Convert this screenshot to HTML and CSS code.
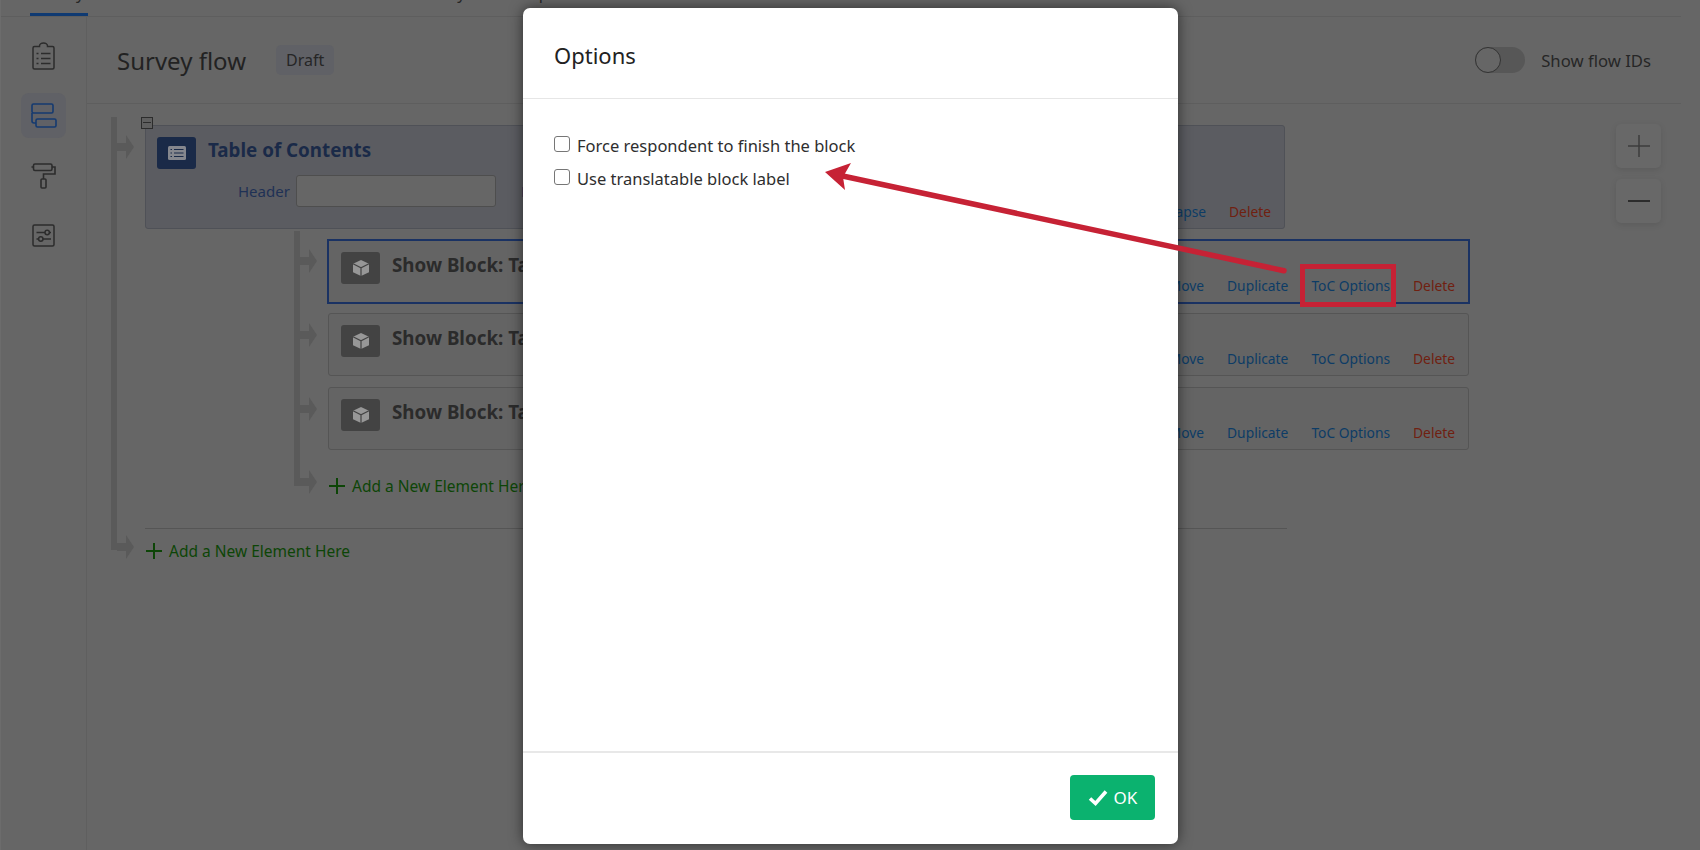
FILE: index.html
```html
<!DOCTYPE html>
<html lang="en">
<head>
<meta charset="utf-8">
<title>Survey flow</title>
<link rel="stylesheet" href="styles.css">
</head>
<body>
<div class="app">
  <nav class="topnav">
    <span class="tab active">Survey</span>
    <span class="tab">Workflows</span>
    <span class="tab">Distributions</span>
    <span class="tab">Data &amp; Analysis</span>
    <span class="tab">Reports</span>
  </nav>
  <div class="workspace">
    <aside class="sidebar">
      <a class="side-item">
        <svg width="23" height="28" viewBox="0 0 23 28" fill="none" stroke="#2c2c2c" stroke-width="1.500"><path d="M7.500 4.500H2.500A1.500 1.500 0 0 0 1 6V25.500A1.500 1.500 0 0 0 2.500 27H20.500A1.500 1.500 0 0 0 22 25.500V6A1.500 1.500 0 0 0 20.500 4.500H15.500V4A4 3 0 0 0 7.500 4Z"/><path d="M9 11.500H18.500M9 16.500H18.500M9 21.500H18.500M4.500 11.500H6.500M4.500 16.500H6.500M4.500 21.500H6.500"/></svg>
      </a>
      <a class="side-item current">
        <svg width="26" height="25" viewBox="0 0 26 25" fill="none" stroke="#143a70" stroke-width="1.600"><rect x="1" y="1" width="21" height="9" rx="1.500"/><rect x="5" y="16" width="20" height="8" rx="1.500"/><path d="M1 10V18A2 2 0 0 0 3 20H5"/></svg>
      </a>
      <a class="side-item">
        <svg width="25" height="26" viewBox="0 0 25 26" fill="none" stroke="#2c2c2c" stroke-width="1.600"><rect x="2.500" y="1" width="18.500" height="6.500" rx="1.500"/><path d="M0.500 4H2.500M21 4H24V11H12.500V16"/><rect x="10" y="16" width="5" height="9" rx="1"/></svg>
      </a>
      <a class="side-item">
        <svg width="23" height="23" viewBox="0 0 23 23" fill="none" stroke="#2c2c2c" stroke-width="1.500"><rect x="1" y="1" width="21" height="21" rx="1.500"/><path d="M4.500 8.500H13M17.500 8.500H19M4.500 15H6.500M11 15H19"/><circle cx="15.200" cy="8.500" r="2.200"/><circle cx="8.800" cy="15" r="2.200"/></svg>
      </a>
    </aside>
    <main class="content">
      <header class="page-head">
        <h1 class="page-title">Survey flow</h1>
        <span class="chip">Draft</span>
        <span class="toggle"><span class="knob"></span></span>
        <span class="toggle-label">Show flow IDs</span>
      </header>
      <div class="canvas">
        <div class="branch outer">
          <div class="row first">
            <svg class="stub" width="17" height="24" viewBox="0 0 17 24"><path class="arrow" d="M0 8H9V0L17 12L9 24V16H0Z"/></svg>
            <section class="block toc">
              <span class="collapse-box"></span>
              <div class="toc-main">
                <div class="block-head">
                  <span class="type-icon navy">
                    <svg width="18" height="14" viewBox="0 0 18 14"><rect width="18" height="14" rx="1.500" fill="#85878e"/><path d="M2.500 3.500H4M6 3.500H15.500M2.500 7H4M6 7H15.500M2.500 10.500H4M6 10.500H15.500" stroke="#1a2a48" stroke-width="1.200"/></svg>
                  </span>
                  <h2 class="block-title navy-text">Table of Contents</h2>
                </div>
                <div class="toc-form">
                  <label class="field-label">Header</label>
                  <span class="field"></span>
                  <label class="field-label second">Footer</label>
                </div>
              </div>
              <div class="actions">
                <a class="link">Collapse</a>
                <a class="link danger">Delete</a>
              </div>
            </section>
          </div>
          <div class="branch inner">
            <div class="row tight">
              <svg class="stub" width="17" height="24" viewBox="0 0 17 24"><path class="arrow" d="M0 8H9V0L17 12L9 24V16H0Z"/></svg>
              <section class="block selected">
                <div class="block-head">
                  <span class="type-icon">
                    <svg width="18" height="18" viewBox="0 0 18 18"><path d="M9 1L17 4.800V13.200L9 17L1 13.200V4.800Z" fill="#979797"/><path d="M1 4.800L9 8.800L17 4.800M9 8.800V17" fill="none" stroke="#434343" stroke-width="1.200"/></svg>
                  </span>
                  <h2 class="block-title">Show Block: Table of Contents</h2>
                </div>
                <div class="actions">
                  <a class="link">Move</a>
                  <a class="link">Duplicate</a>
                  <a class="link">ToC Options</a>
                  <a class="link danger">Delete</a>
                </div>
              </section>
            </div>
            <div class="row">
              <svg class="stub" width="17" height="24" viewBox="0 0 17 24"><path class="arrow" d="M0 8H9V0L17 12L9 24V16H0Z"/></svg>
              <section class="block">
                <div class="block-head">
                  <span class="type-icon">
                    <svg width="18" height="18" viewBox="0 0 18 18"><path d="M9 1L17 4.800V13.200L9 17L1 13.200V4.800Z" fill="#979797"/><path d="M1 4.800L9 8.800L17 4.800M9 8.800V17" fill="none" stroke="#434343" stroke-width="1.200"/></svg>
                  </span>
                  <h2 class="block-title">Show Block: Table of Contents</h2>
                </div>
                <div class="actions">
                  <a class="link">Move</a>
                  <a class="link">Duplicate</a>
                  <a class="link">ToC Options</a>
                  <a class="link danger">Delete</a>
                </div>
              </section>
            </div>
            <div class="row">
              <svg class="stub" width="17" height="24" viewBox="0 0 17 24"><path class="arrow" d="M0 8H9V0L17 12L9 24V16H0Z"/></svg>
              <section class="block">
                <div class="block-head">
                  <span class="type-icon">
                    <svg width="18" height="18" viewBox="0 0 18 18"><path d="M9 1L17 4.800V13.200L9 17L1 13.200V4.800Z" fill="#979797"/><path d="M1 4.800L9 8.800L17 4.800M9 8.800V17" fill="none" stroke="#434343" stroke-width="1.200"/></svg>
                  </span>
                  <h2 class="block-title">Show Block: Table of Contents</h2>
                </div>
                <div class="actions">
                  <a class="link">Move</a>
                  <a class="link">Duplicate</a>
                  <a class="link">ToC Options</a>
                  <a class="link danger">Delete</a>
                </div>
              </section>
            </div>
            <div class="row add-row">
              <svg class="stub" width="17" height="24" viewBox="0 0 17 24"><path class="arrow" d="M0 8H9V0L17 12L9 24V16H0Z"/></svg>
              <a class="add-link">
                <svg width="16" height="16" viewBox="0 0 16 16"><path d="M8 0V16M0 8H16" stroke="#0d4507" stroke-width="2"/></svg>
                Add a New Element Here
              </a>
            </div>
          </div>
          <hr class="separator">
          <div class="row add-row last">
            <svg class="stub" width="17" height="24" viewBox="0 0 17 24"><path class="arrow" d="M0 8H9V0L17 12L9 24V16H0Z"/></svg>
            <a class="add-link">
              <svg width="16" height="16" viewBox="0 0 16 16"><path d="M8 0V16M0 8H16" stroke="#0d4507" stroke-width="2"/></svg>
              Add a New Element Here
            </a>
          </div>
        </div>
        <div class="zoom-tools">
          <button class="zoom-btn"><svg width="22" height="22" viewBox="0 0 22 22"><path d="M11 0V22M0 11H22" stroke="#3c3c3c" stroke-width="1.500"/></svg></button>
          <button class="zoom-btn"><svg width="22" height="22" viewBox="0 0 22 22"><path d="M0 11H22" stroke="#2c2c2c" stroke-width="2"/></svg></button>
        </div>
      </div>
    </main>
  </div>

  <div class="dialog-layer">
    <div class="dialog">
      <div class="dialog-head">Options</div>
      <div class="dialog-body">
        <label class="check"><span class="box"></span>Force respondent to finish the block</label>
        <label class="check"><span class="box"></span>Use translatable block label</label>
      </div>
      <div class="dialog-foot">
        <button class="ok">
          <svg width="20" height="18" viewBox="0 0 20 18"><path d="M2 9.500L7.500 14.500L18 2.500" fill="none" stroke="#fff" stroke-width="3.600"/></svg>
          OK
        </button>
      </div>
    </div>
  </div>

  <svg class="annotation" width="1700" height="850" viewBox="0 0 1700 850">
    <path d="M1284 270.700L838 175" fill="none" stroke="#c62235" stroke-width="5.500" stroke-linecap="round"/>
    <path d="M825 172L851 163L843 177L845 190Z" fill="#c62235"/>
    <rect x="1302.500" y="266.500" width="91" height="38" fill="none" stroke="#c62235" stroke-width="5"/>
  </svg>
</div>
</body>
</html>
```

FILE: styles.css
```css
* { box-sizing: border-box; }
html, body { margin: 0; padding: 0; }
body {
  font-family: "Noto Sans", "Open Sans", sans-serif;
  background: #666;
  color: #262626;
}
.app {
  position: relative;
  width: 1700px;
  height: 850px;
  overflow: hidden;
  display: flex;
  flex-direction: column;
  border-left: 1px solid #6c6c6c;
}
.topnav {
  flex: none;
  height: 17px;
  margin-right: 19px;
  padding-left: 29px;
  display: flex;
  align-items: flex-end;
  gap: 35px;
  overflow: hidden;
  border-bottom: 1px solid #5e5e5e;
  font-size: 16px;
  line-height: 22px;
}
.tab {
  flex: none;
  padding-bottom: 12px;
  color: #262626;
}
.tab.active {
  width: 58px;
  padding-bottom: 9px;
  text-align: center;
  border-bottom: 4px solid #0f3a72;
  margin-bottom: -1px;
}
.workspace { flex: 1; display: flex; min-height: 0; }
.sidebar {
  flex: none;
  width: 86px;
  padding-top: 16px;
  display: flex;
  flex-direction: column;
  align-items: center;
  gap: 15px;
  border-right: 1px solid #5f5f5f;
}
.side-item {
  width: 45px;
  height: 45px;
  border-radius: 8px;
  display: flex;
  align-items: center;
  justify-content: center;
}
.side-item.current { background: #606166; }
.content {
  flex: 1;
  min-width: 0;
  margin-right: 19px;
  display: flex;
  flex-direction: column;
}
.page-head {
  flex: none;
  height: 87px;
  padding: 0 30px 0 30px;
  display: flex;
  align-items: center;
  border-bottom: 1px solid #5e5e5e;
}
.page-title {
  margin: 0 30px 0 0;
  font-size: 24px;
  font-weight: 400;
  color: #222;
}
.chip {
  padding: 0 10px;
  height: 30px;
  line-height: 30px;
  border-radius: 5px;
  background: #606166;
  font-size: 16px;
  color: #262626;
}
.toggle {
  margin-left: auto;
  width: 50px;
  height: 26px;
  border-radius: 13px;
  background: #575757;
  display: block;
}
.knob {
  display: block;
  width: 26px;
  height: 26px;
  border-radius: 50%;
  background: #666;
  border: 1.500px solid #333;
}
.toggle-label {
  margin-left: 16px;
  font-size: 16.700px;
  color: #262626;
}
.canvas {
  flex: 1;
  position: relative;
  padding: 13px 0 0 24px;
}
.branch { position: relative; padding-left: 6px; }
.branch::before {
  content: "";
  position: absolute;
  left: 0;
  top: 0;
  width: 6px;
  background: #5a5a5a;
}
.outer::before { bottom: 23px; }
.outer { width: 1180px; padding-top: 8px; }
.inner {
  margin: 2px 0 0 177px;
  padding-top: 8px;
  width: 1176px;
}
.inner::before { bottom: 25px; }
.row { display: flex; align-items: flex-start; margin-bottom: 11px; }
.row.first { margin-bottom: 0; }
.row.tight { margin-bottom: 9px; }
.stub { flex: none; margin: 10px 11px 0 0; }
.arrow { fill: #5a5a5a; }
.block {
  position: relative;
  flex: none;
  width: 1141px;
  height: 63px;
  display: flex;
  justify-content: space-between;
  padding: 11px 13px 7px 12px;
  background: #646464;
  border: 1px solid #555;
  border-radius: 3px;
}
.block.selected {
  height: 65px;
  width: 1143px;
  margin-left: -1px;
  border: 2px solid #1a3263;
  border-radius: 0;
}
.block.toc {
  width: 1140px;
  height: 104px;
  background: #5b5c61;
  border-color: #4f5157;
  padding: 11px 13px 7px 11px;
}
.collapse-box {
  position: absolute;
  left: -5px;
  top: -9px;
  width: 12px;
  height: 12px;
  background: #5f5f5f;
  border: 1px solid #2c2c2c;
}
.collapse-box::after {
  content: "";
  position: absolute;
  left: 1px;
  right: 1px;
  top: 4px;
  height: 1px;
  background: #2c2c2c;
}
.block-head { display: flex; align-items: flex-start; align-self: flex-start; }
.type-icon {
  flex: none;
  width: 39px;
  height: 32px;
  border-radius: 3px;
  background: #434343;
  display: flex;
  align-items: center;
  justify-content: center;
}
.type-icon.navy { background: #1a2a48; }
.block-title {
  margin: 0 0 0 12px;
  font-size: 18.800px;
  line-height: 27px;
  font-weight: 700;
  white-space: nowrap;
  color: #2b2b2b;
}
.navy-text { color: #1a2a48; }
.toc-form {
  display: flex;
  align-items: center;
  margin-top: 6px;
  height: 32px;
}
.field-label { color: #1f3155; font-size: 15px; margin-top: -1px; }
.field-label:first-child { margin-left: 81px; }
.field-label.second { margin-left: 25px; }
.field {
  width: 200px;
  height: 32px;
  margin-left: 6px;
  background: #666;
  border: 1px solid #4e4e4e;
  border-radius: 3px;
}
.toc-main { display: flex; flex-direction: column; }
.actions {
  align-self: flex-end;
  display: flex;
  gap: 23px;
  font-size: 13.800px;
  line-height: 18px;
}
.link { color: #0d3c66; }
.link.danger { color: #702010; }
.add-row { margin-bottom: 0; height: 50px; align-items: center; }
.add-row .stub { margin-top: -8px; }
.add-link {
  display: flex;
  align-items: center;
  gap: 7px;
  margin-left: 1px;
  font-size: 15.500px;
  color: #0d4507;
  white-space: nowrap;
}
.separator {
  width: 1142px;
  height: 1px;
  margin: 17px 0 0 28px;
  border: 0;
  background: #555;
}
.row.last { height: 44px; }
.zoom-tools {
  position: absolute;
  right: 20px;
  top: 20px;
  display: flex;
  flex-direction: column;
  gap: 11px;
}
.zoom-btn {
  width: 45px;
  height: 44px;
  padding: 0;
  display: flex;
  align-items: center;
  justify-content: center;
  background: #686868;
  border: 0;
  border-radius: 5px;
  box-shadow: 0 2px 6px rgba(0,0,0,.1);
}
.dialog-layer {
  position: absolute;
  inset: 0;
  display: flex;
  justify-content: center;
  padding-top: 8px;
}
.dialog {
  width: 655px;
  height: 836px;
  background: #fff;
  border-radius: 7px;
  box-shadow: 0 0 14px rgba(0,0,0,.55);
  display: flex;
  flex-direction: column;
}
.dialog-head {
  flex: none;
  height: 91px;
  padding: 31px 31px 0;
  font-size: 22px;
  line-height: 32px;
  color: #222;
  border-bottom: 1px solid #e6e6e6;
}
.dialog-body {
  flex: 1;
  padding: 35px 31px 0;
  display: flex;
  flex-direction: column;
  gap: 11px;
}
.check {
  display: flex;
  align-items: center;
  height: 22px;
  font-size: 16.500px;
  color: #2e2e2e;
}
.box {
  flex: none;
  width: 16px;
  height: 16px;
  margin: -3px 7px 0 0;
  border: 1px solid #767676;
  border-radius: 3px;
  background: #fff;
}
.dialog-foot {
  flex: none;
  height: 93px;
  padding: 22px 23px 0 0;
  display: flex;
  justify-content: flex-end;
  border-top: 2px solid #e8e8e8;
}
.ok {
  width: 85px;
  height: 45px;
  display: flex;
  align-items: center;
  justify-content: center;
  gap: 6px;
  background: #0bb26f;
  border: 0;
  border-radius: 4px;
  color: #fff;
  font: 17px "Noto Sans", "Open Sans", sans-serif;
}
.annotation {
  position: absolute;
  left: -1px;
  top: 0;
  pointer-events: none;
}
```
